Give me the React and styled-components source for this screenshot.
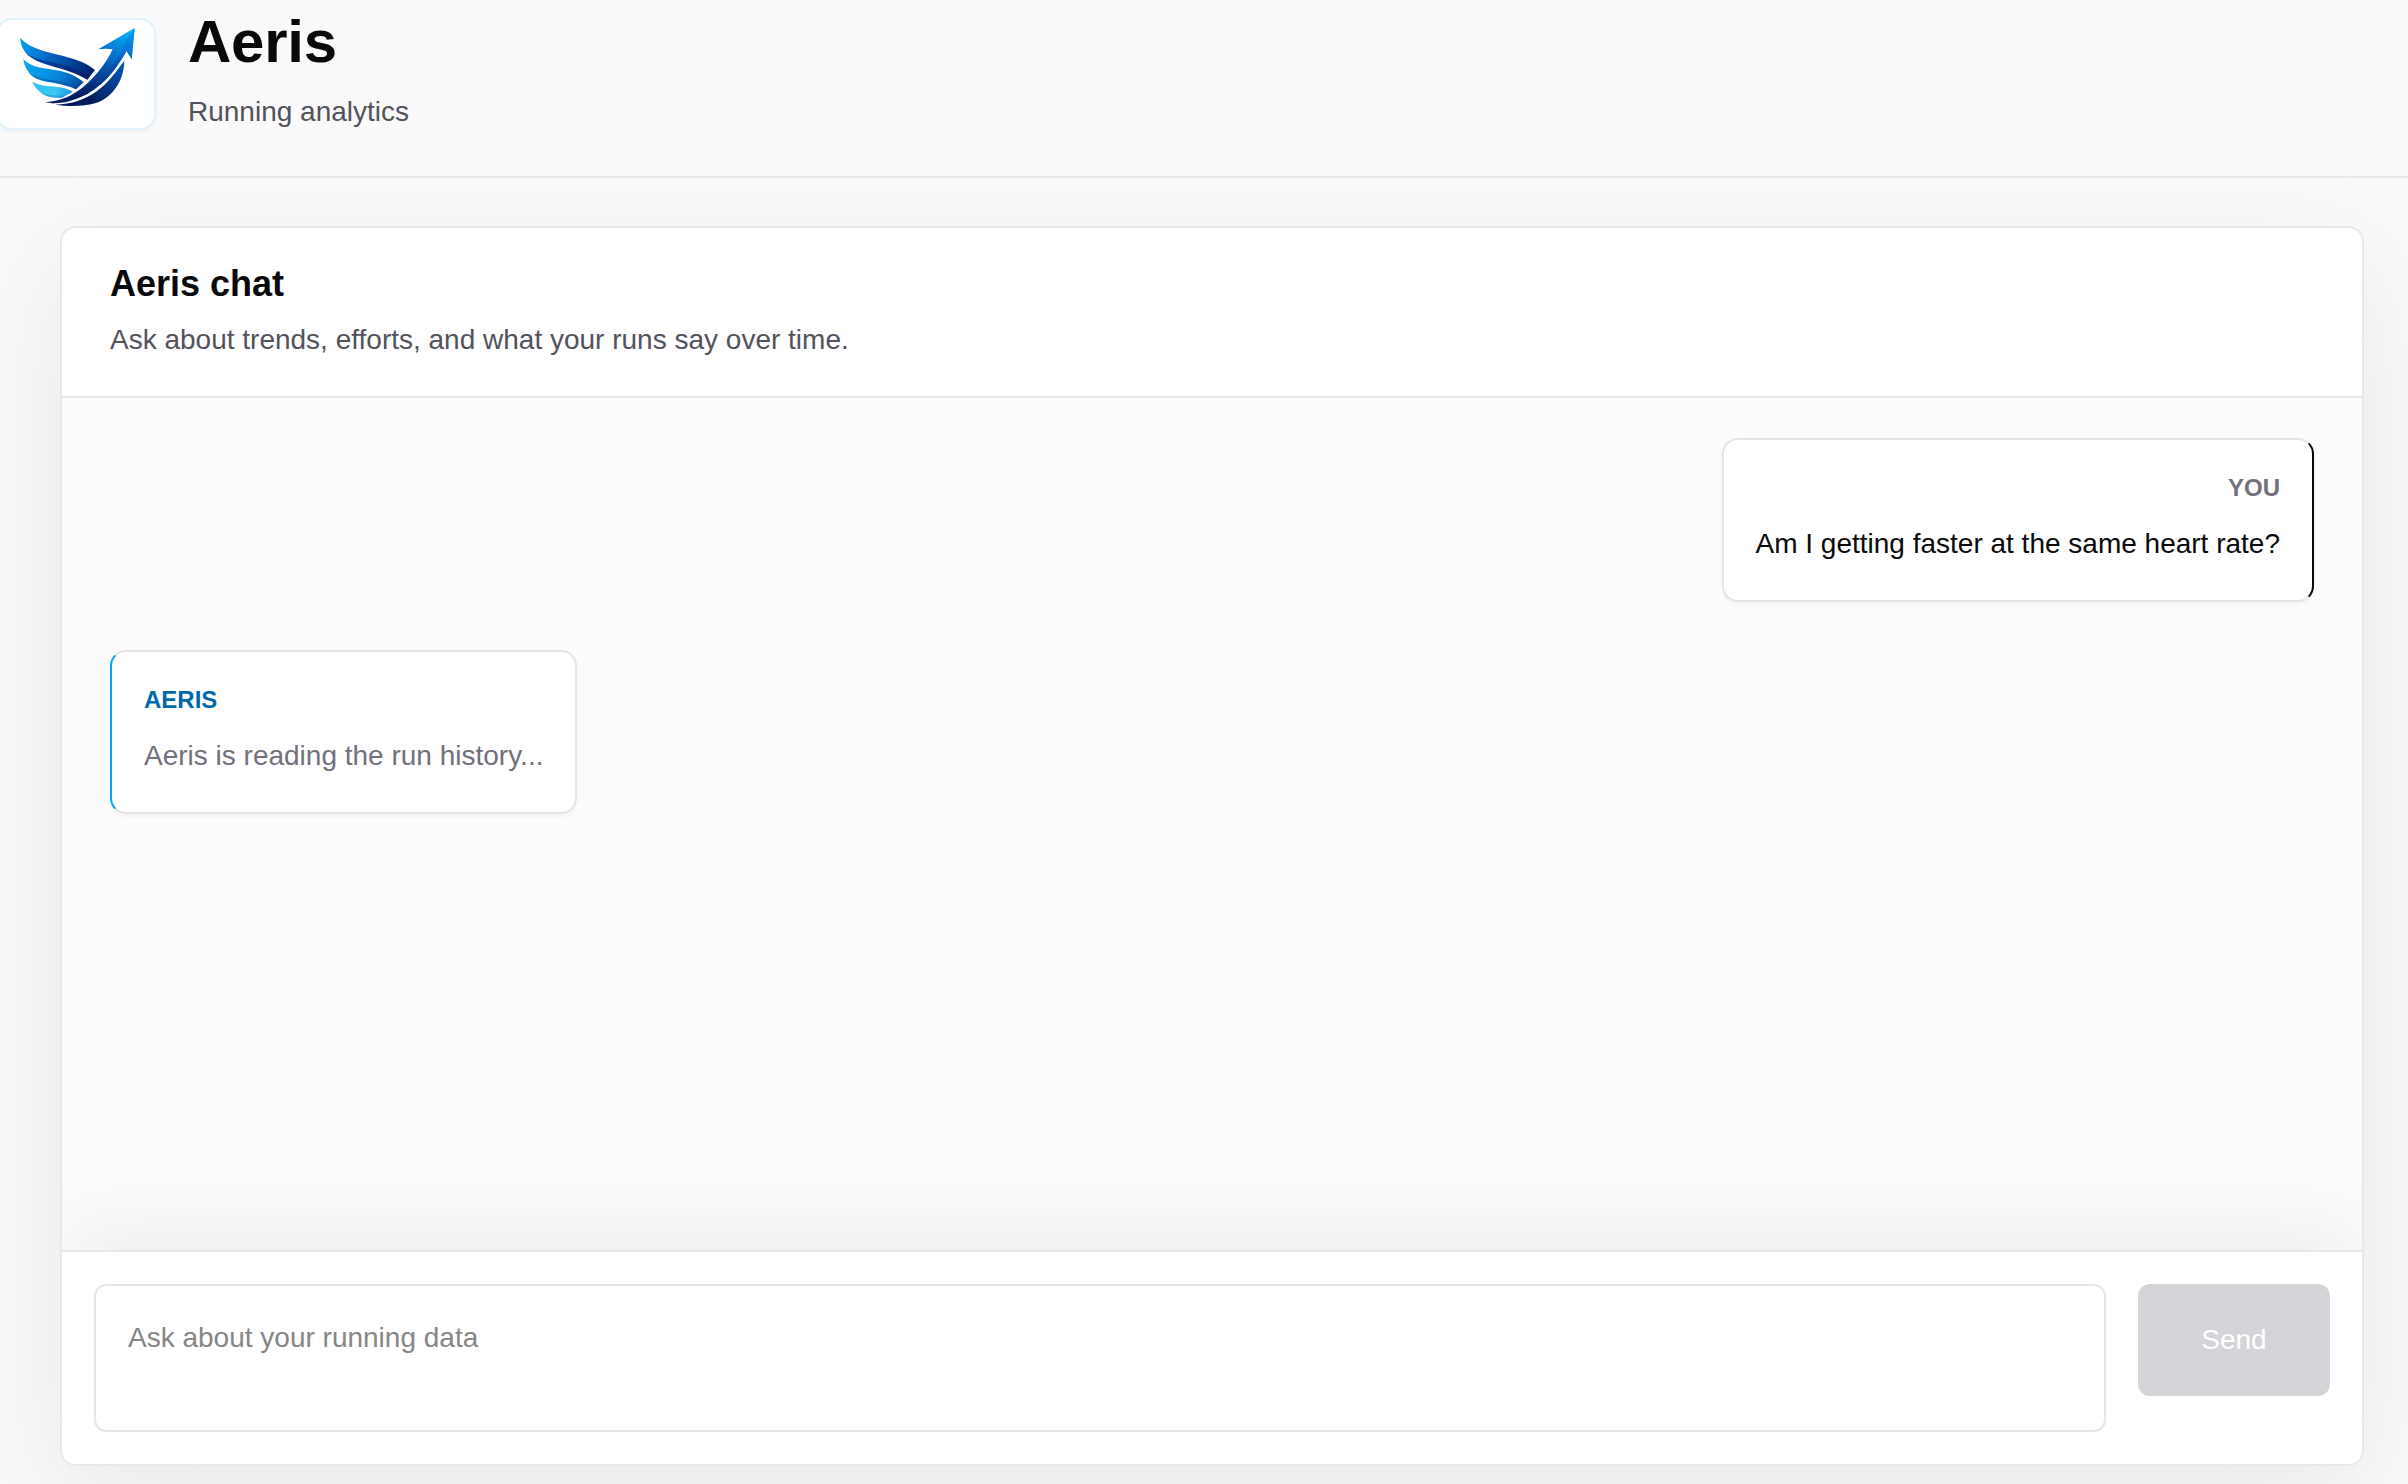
import React, {useState} from 'react'
import styled, {createGlobalStyle} from 'styled-components'

const messages = [
  {id: 1, from: 'user', label: 'You', text: 'Am I getting faster at the same heart rate?'},
  {id: 2, from: 'aeris', label: 'Aeris', text: 'Aeris is reading the run history...', pending: true},
]

const Logo = () => (
  <LogoSvg viewBox="54 78 360 246" aria-label="Aeris logo">
    <defs>
      <linearGradient id="arrow" gradientUnits="userSpaceOnUse" x1="395" y1="90" x2="250" y2="300">
        <stop offset="0" stopColor="#00b8fb" />
        <stop offset="0.35" stopColor="#0675d2" />
        <stop offset="0.7" stopColor="#033a8e" />
        <stop offset="1" stopColor="#031f66" />
      </linearGradient>
      <linearGradient id="arrowShade" gradientUnits="userSpaceOnUse" x1="400" y1="100" x2="250" y2="290">
        <stop offset="0" stopColor="#0a8ae6" />
        <stop offset="0.45" stopColor="#0550ae" />
        <stop offset="1" stopColor="#021a5c" />
      </linearGradient>
      <linearGradient id="top" gradientUnits="userSpaceOnUse" x1="60" y1="115" x2="280" y2="230">
        <stop offset="0" stopColor="#06a4f0" />
        <stop offset="0.4" stopColor="#0566c6" />
        <stop offset="1" stopColor="#021c66" />
      </linearGradient>
      <linearGradient id="middle" gradientUnits="userSpaceOnUse" x1="70" y1="180" x2="255" y2="260">
        <stop offset="0" stopColor="#0ba9f2" />
        <stop offset="0.6" stopColor="#0784da" />
        <stop offset="1" stopColor="#033f92" />
      </linearGradient>
      <linearGradient id="low" gradientUnits="userSpaceOnUse" x1="98" y1="250" x2="215" y2="285">
        <stop offset="0" stopColor="#2fc2f3" />
        <stop offset="0.6" stopColor="#3cc8f2" />
        <stop offset="1" stopColor="#1590da" />
      </linearGradient>
    </defs>
    <path fill="url(#top)" d="M60 113C96 150 140 154 190 168C230 179 262 190 285 210L262 239C228 217 188 208 143 194C92 180 64 158 60 113Z" />
    <path fill="#031f6e" opacity="0.55" d="M76 157C108 184 150 182 200 198C232 208 255 218 269 230L262 239C228 217 188 208 143 194C110 184 88 172 76 157Z" />
    <path fill="url(#middle)" d="M70 178C96 204 130 204 170 211C204 217 230 229 251 247L228 268C200 254 172 250 140 245C102 238 76 220 70 178Z" />
    <path fill="#043f9a" opacity="0.4" d="M86 218C114 238 150 237 186 244C210 249 226 254 237 260L228 268C200 254 172 250 140 245C114 240 96 232 86 218Z" />
    <path fill="url(#low)" d="M97 244C118 260 144 258 168 260C190 262 205 267 218 275L186 293C144 296 110 280 97 244Z" />
    <path fill="#0878cc" opacity="0.4" d="M118 275C139 288 165 286 197 287L186 293C155 295 134 290 118 275Z" />
    <path fill="url(#arrow)" d="M404 84L295 148Q315 144 338 148C320 185 292 226 252 259C220 286 185 303 135 307C160 313 200 308 240 292C300 268 345 215 380 153L395 178Z" />
    <path fill="url(#arrowShade)" opacity="0.75" d="M404 84L376 127C350 190 308 242 262 270C220 296 180 306 150 309C190 312 215 304 240 292C300 268 345 215 380 153L395 178Z" />
    <path fill="url(#arrowShade)" d="M373 182C372 240 340 292 285 310C250 320 205 320 165 314C215 313 255 299 290 274C325 249 350 212 373 182Z" />
  </LogoSvg>
)

const App = () => {
  const [question, setQuestion] = useState('')

  return (
    <Page>
      <GlobalStyle />
      <Header>
        <LogoBox>
          <Logo />
        </LogoBox>
        <Brand>
          <BrandName>Aeris</BrandName>
          <Tagline>Running analytics</Tagline>
        </Brand>
      </Header>
      <Card>
        <CardHeader>
          <CardTitle>Aeris chat</CardTitle>
          <CardText>Ask about trends, efforts, and what your runs say over time.</CardText>
        </CardHeader>
        <Messages>
          {messages.map(m => (
            <Message key={m.id} $from={m.from}>
              <Label $from={m.from}>{m.label}</Label>
              <Text $pending={m.pending}>{m.text}</Text>
            </Message>
          ))}
        </Messages>
        <Composer>
          <Input
            placeholder="Ask about your running data"
            value={question}
            onChange={e => setQuestion(e.target.value)}
          />
          <SendButton disabled={!question}>Send</SendButton>
        </Composer>
      </Card>
    </Page>
  )
}

export default App


const GlobalStyle = createGlobalStyle`
  * {
    box-sizing: border-box;
  }
  body {
    margin: 0;
    background: #fafafa;
    color: #09090b;
    font-family: "Liberation Sans", Arial, sans-serif;
  }
`

const Page = styled.div`
  height: 1484px;
  overflow: hidden;
  display: flex;
  flex-direction: column;
`

const Header = styled.header`
  height: 178px;
  flex-shrink: 0;
  display: flex;
  align-items: flex-start;
  gap: 32px;
  padding-top: 18px;
  border-bottom: 2px solid #e7e7e7;
`

const LogoBox = styled.div`
  width: 160px;
  height: 112px;
  margin-left: -4px;
  padding: 6px 0 0 20px;
  background: #fff;
  border: 2px solid #dff2fe;
  border-radius: 16px;
  box-shadow: 0 2px 4px rgba(0, 0, 0, 0.05);
`

const LogoSvg = styled.svg`
  display: block;
  width: 120px;
  height: 82px;
`

const Brand = styled.div`
  margin-top: -12px;
`

const BrandName = styled.h1`
  margin: 0;
  font-size: 60px;
  line-height: 72px;
  font-weight: 700;
  letter-spacing: -0.25px;
`

const Tagline = styled.p`
  margin: 14px 0 0;
  font-size: 28px;
  line-height: 40px;
  color: #52525c;
`

const Card = styled.main`
  width: 2304px;
  height: 1240px;
  margin: 48px 0 0 60px;
  flex-shrink: 0;
  display: flex;
  flex-direction: column;
  background: #fff;
  border: 2px solid #e8e8e9;
  border-radius: 16px;
  box-shadow: 0 36px 120px rgba(24, 24, 27, 0.08);
  overflow: hidden;
`

const CardHeader = styled.div`
  height: 170px;
  padding: 32px 48px 0;
  border-bottom: 2px solid #e7e7e7;
`

const CardTitle = styled.h2`
  margin: 0;
  font-size: 36px;
  line-height: 48px;
  font-weight: 700;
`

const CardText = styled.p`
  margin: 8px 0 0;
  font-size: 28px;
  line-height: 48px;
  color: #52525c;
`

const Messages = styled.div`
  flex: 1;
  display: flex;
  flex-direction: column;
  gap: 48px;
  padding: 40px 48px;
  background: #fcfcfc;
`

const Message = styled.div`
  height: 164px;
  padding: 32px;
  align-self: ${p => p.$from === 'user' ? 'flex-end' : 'flex-start'};
  text-align: ${p => p.$from === 'user' ? 'right' : 'left'};
  background: #fff;
  border: 2px solid #e4e4e4;
  border-right-color: ${p => p.$from === 'user' ? '#09090b' : '#e4e4e4'};
  border-left-color: ${p => p.$from === 'user' ? '#e4e4e4' : '#00a6f4'};
  border-radius: 16px;
  box-shadow: 0 2px 4px rgba(0, 0, 0, 0.05);
`

const Label = styled.div`
  font-size: 24px;
  line-height: 32px;
  font-weight: 700;
  text-transform: uppercase;
  color: ${p => p.$from === 'user' ? '#71717b' : '#0069a8'};
`

const Text = styled.div`
  margin-top: 12px;
  font-size: 28px;
  line-height: 56px;
  color: ${p => p.$pending ? '#71717b' : '#09090b'};
`

const Composer = styled.form`
  height: 214px;
  display: flex;
  align-items: flex-start;
  gap: 32px;
  padding: 32px;
  background: #fff;
  border-top: 2px solid #e7e7e7;
  box-shadow: 0 -24px 80px rgba(24, 24, 27, 0.06);
`

const Input = styled.textarea`
  flex: 1;
  height: 148px;
  padding: 24px 32px;
  border: 2px solid #e4e4e4;
  border-radius: 12px;
  background: #fff;
  font-family: inherit;
  font-size: 28px;
  line-height: 56px;
  resize: none;
  outline: none;
  &::placeholder {
    color: #868686;
  }
`

const SendButton = styled.button`
  width: 192px;
  height: 112px;
  border: 0;
  border-radius: 12px;
  background: #d4d4d8;
  color: #fff;
  font-family: inherit;
  font-size: 28px;
`
